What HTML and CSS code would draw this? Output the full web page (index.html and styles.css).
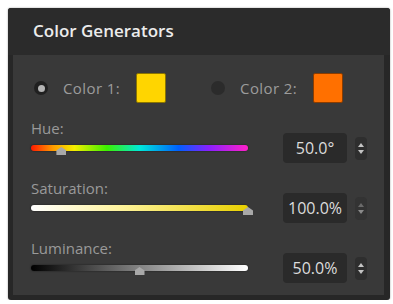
FILE: index.html
```html
<!DOCTYPE html>
<html lang="en">
<head>
  <meta charset="UTF-8">
  <meta name="viewport" content="width=device-width, initial-scale=1.0">
  <title>Color Generators</title>
  <link rel="stylesheet" href="styles.css">
</head>
<body>
  <div class="panel">
    <div class="panel-header">Color Generators</div>
    <div class="panel-body">
      <div class="color-row">
        <span class="radio checked"></span>
        <span class="color-label">Color 1:</span>
        <span class="swatch yellow"></span>
        <span class="radio second"></span>
        <span class="color-label">Color 2:</span>
        <span class="swatch orange"></span>
      </div>

      <div class="slider-block">
        <div class="slider-label">Hue:</div>
        <div class="slider-row">
          <div class="track hue">
            <span class="thumb" style="left: 14%"></span>
          </div>
          <div class="value-box">50.0°</div>
          <div class="spinner"><span class="up"></span><span class="down"></span></div>
        </div>
      </div>

      <div class="slider-block">
        <div class="slider-label">Saturation:</div>
        <div class="slider-row">
          <div class="track saturation">
            <span class="thumb" style="left: 100%"></span>
          </div>
          <div class="value-box">100.0%</div>
          <div class="spinner dim"><span class="up"></span><span class="down"></span></div>
        </div>
      </div>

      <div class="slider-block">
        <div class="slider-label">Luminance:</div>
        <div class="slider-row">
          <div class="track luminance">
            <span class="thumb" style="left: 50%"></span>
          </div>
          <div class="value-box">50.0%</div>
          <div class="spinner"><span class="up"></span><span class="down"></span></div>
        </div>
      </div>
    </div>
  </div>
</body>
</html>
```

FILE: styles.css
```css
body {
  margin: 0;
  background: #ffffff;
  font-family: "Open Sans", "Liberation Sans", sans-serif;
}
.panel {
  margin: 8px 0 0 8px;
  width: 382px;
  height: 292px;
  background: #272727;
  border-radius: 3px;
  display: flex;
  flex-direction: column;
  box-shadow: 0 0 2px rgba(0, 0, 0, 0.4);
}
.panel-header {
  height: 47px;
  line-height: 46px;
  padding-left: 25px;
  color: #ececec;
  font-size: 17px;
  font-weight: 600;
  background: #2b2b2b;
  border-radius: 3px 3px 0 0;
}
.panel-body {
  flex: 1;
  margin: 0 6px 5px 5px;
  background: #393939;
  padding: 18px 0 0 18px;
  display: flex;
  flex-direction: column;
  gap: 16px;
}
.color-row {
  display: flex;
  align-items: center;
  height: 30px;
}
.radio {
  width: 14px;
  height: 14px;
  border-radius: 50%;
  background: #2b2b2b;
  margin-left: 3px;
  display: flex;
  align-items: center;
  justify-content: center;
}
.radio.checked {
  background: #202020;
}
.radio.checked::after {
  content: "";
  width: 7px;
  height: 7px;
  border-radius: 50%;
  background: #b4b4b4;
}
.radio.second {
  margin-left: 45px;
}
.color-label {
  color: #9c9c9c;
  font-size: 15px;
  letter-spacing: 0.4px;
  margin: 0 16px 0 15px;
}
.swatch {
  width: 28px;
  height: 28px;
  border: 1px solid #5a4a10;
  border-radius: 2px;
}
.swatch.yellow {
  background: #ffd500;
  border-color: #8a7400;
}
.swatch.orange {
  background: #ff7000;
  border-color: #8a3c00;
}
.slider-block {
  display: flex;
  flex-direction: column;
}
.slider-label {
  color: #9a9a9a;
  font-size: 15px;
  line-height: 18px;
  margin-bottom: -4px;
}
.slider-row {
  display: flex;
  align-items: center;
  height: 30px;
}
.track {
  position: relative;
  width: 217px;
  height: 6px;
  border-radius: 3px;
  box-shadow: 0 0 2px rgba(0, 0, 0, 0.6);
}
.track.hue {
  background: linear-gradient(to right, #ff1a00, #ff9a00 10%, #f4ee00 20%, #3cf000 35%, #00e8d8 50%, #0060ff 68%, #8a20ff 82%, #ff20c8 100%);
}
.track.saturation {
  background: linear-gradient(to right, #ffffff, #fff4a0 40%, #e8d000 100%);
}
.track.luminance {
  background: linear-gradient(to right, #000000, #777777 45%, #ffffff 100%);
}
.thumb {
  position: absolute;
  top: 2px;
  width: 10px;
  height: 8px;
  margin-left: -5px;
  background: #a8a8a8;
  clip-path: polygon(50% 0, 100% 45%, 100% 100%, 0 100%, 0 45%);
}
.value-box {
  width: 64px;
  height: 30px;
  margin-left: 35px;
  background: #2a2a2a;
  border-radius: 4px;
  color: #dcdcdc;
  font-size: 16px;
  line-height: 30px;
  text-align: center;
}
.spinner {
  width: 12px;
  height: 23px;
  margin-left: 8px;
  background: #2e2e2e;
  border-radius: 4px;
  display: flex;
  flex-direction: column;
  align-items: center;
  justify-content: center;
  gap: 3px;
}
.spinner .up,
.spinner .down {
  width: 0;
  height: 0;
  border-left: 3px solid transparent;
  border-right: 3px solid transparent;
}
.spinner .up {
  border-bottom: 4px solid #c4c4c4;
}
.spinner .down {
  border-top: 4px solid #c4c4c4;
}
.spinner.dim {
  background: #333333;
}
.spinner.dim .up {
  border-bottom-color: #6a6a6a;
}
.spinner.dim .down {
  border-top-color: #8a8a8a;
}
```
